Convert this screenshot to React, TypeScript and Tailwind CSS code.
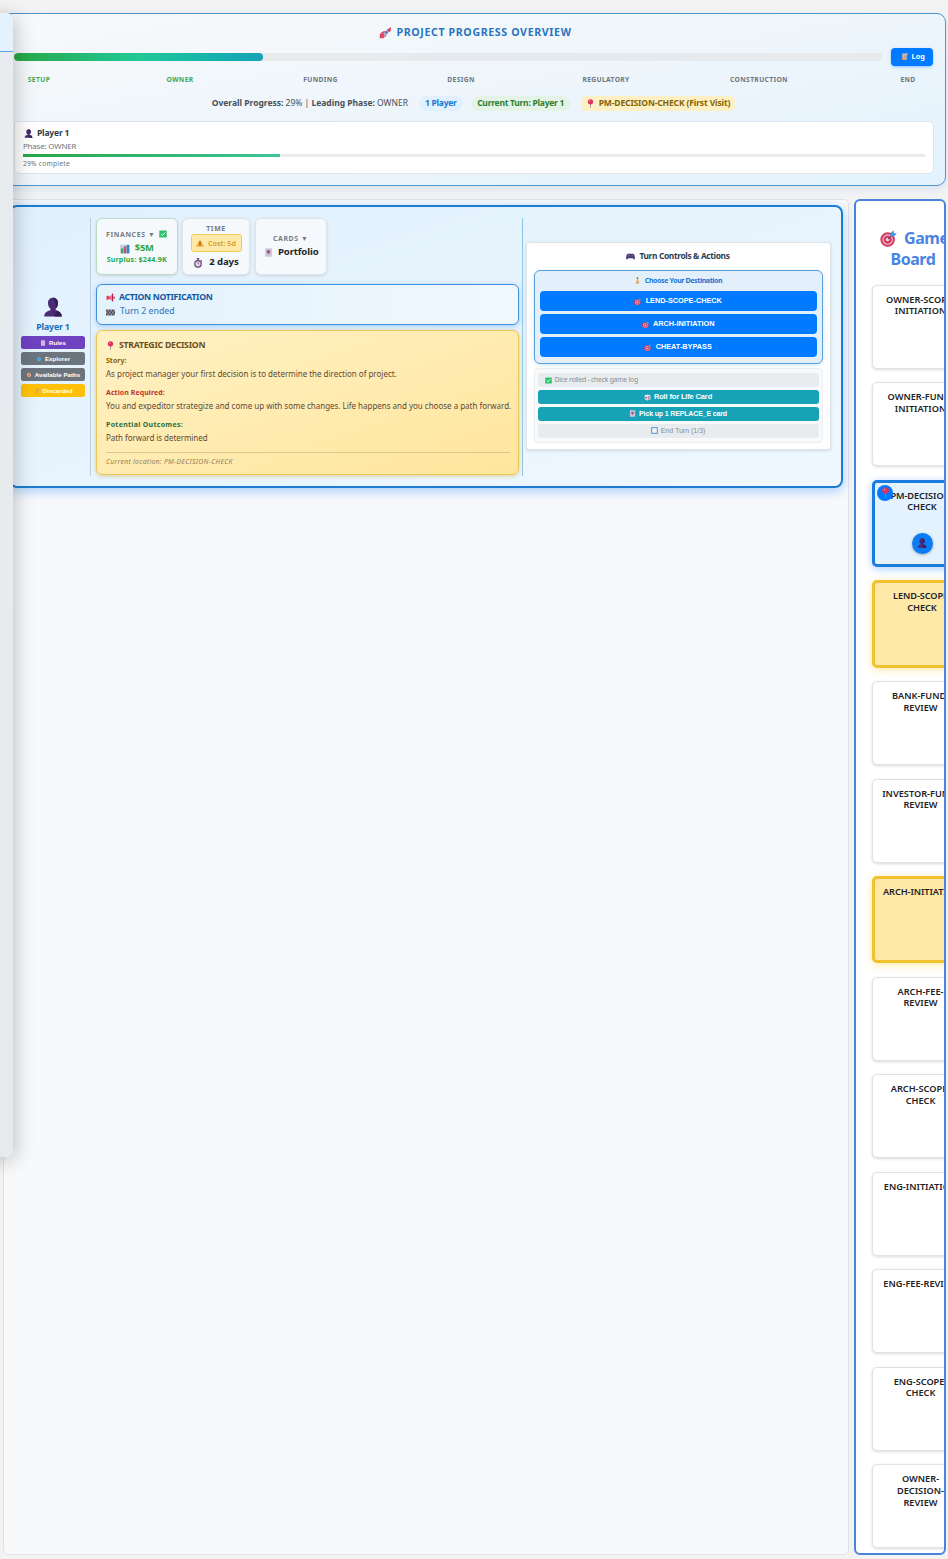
import React from "react";

type IconName =
  | "rocket" | "scroll" | "person" | "chart" | "check" | "warn" | "watch" | "card"
  | "mega" | "flag" | "pin" | "book" | "lens" | "compass" | "bin" | "target"
  | "pad" | "walker" | "die" | "square";

const shapes: Record<IconName, React.ReactNode> = {
  rocket: (
    <>
      <path d="M2 8l5-3 4 4-3 5z" fill="#e5476d" />
      <path d="M4.500 10 11 3l4-1-1 4-7 7z" fill="#aab5cc" />
      <path d="M11 3.500 16 0l-.5 5.500-2 1z" fill="#dd3d5c" />
      <circle cx="10" cy="7" r="1.700" fill="#4d74c9" />
      <path d="M1 9h5.500v6H1z" fill="#e04565" />
    </>
  ),
  scroll: (
    <>
      <path d="M3 1h11v3h-2v11H2v-3h1z" fill="#f2d0ae" />
      <path d="M5 4h6M5 7h6M5 10h6" stroke="#b0703f" strokeWidth="1.300" />
      <path d="M2 12h9v3H2z" fill="#e08a4f" />
    </>
  ),
  person: (
    <>
      <path d="M8 .5c2.800 0 4 2 4 4.300 0 2-.8 3.700-2 4.500v1.200c2.600.6 5 1.800 5 5H1c0-3.200 2.400-4.400 5-5V9.300c-1.200-.8-2-2.500-2-4.500C4 2.500 5.200.5 8 .5z" fill="#4b2c74" />
      <path d="M8 .5c2.800 0 4 2 4 4.300 0 2-.8 3.700-2 4.500v1.200c2.600.6 5 1.800 5 5H9c2-4 2-10-1-15z" fill="#351d57" />
    </>
  ),
  chart: (
    <>
      <path d="M0 1h16v14H0z" fill="#c5d1e0" />
      <path d="M1.500 7h3.800v8H1.500z" fill="#3fae6a" />
      <path d="M6 4h3.800v11H6z" fill="#d8476c" />
      <path d="M10.600 1.500h4V15h-4z" fill="#3181cf" />
    </>
  ),
  check: (
    <>
      <rect x="0.500" y="1" width="15" height="14" rx="1" fill="#2fc26b" />
      <path d="M4 8.200 7 11l5-6" stroke="#eafff2" strokeWidth="2" fill="none" />
    </>
  ),
  warn: (
    <>
      <path d="M8 1l7.500 14H.5z" fill="#f2a02c" />
      <path d="M8 5v5M8 11.500v2" stroke="#5b3a1c" strokeWidth="1.800" />
    </>
  ),
  watch: (
    <>
      <circle cx="8" cy="9.300" r="5.200" fill="#e7dcef" stroke="#5f4870" strokeWidth="2" />
      <path d="M6 1h4M8 1v3M12.500 3.500l1.500 1.500" stroke="#5f4870" strokeWidth="2" />
      <path d="M8 6v3.500h2" stroke="#c03a6c" strokeWidth="1.300" fill="none" />
    </>
  ),
  card: (
    <>
      <rect x="2" y="0.500" width="12" height="15" rx="1" fill="#cfc6db" />
      <path d="M5 4h6v3.500L8 12 5 7.500z" fill="#b0607f" />
      <path d="M6.500 5h3v2h-3z" fill="#6a5a95" />
    </>
  ),
  mega: (
    <>
      <path d="M1 5h4v7H1z" fill="#d8315c" />
      <path d="M5 7l5-4v10l-5-3z" fill="#ea5a7b" />
      <path d="M10.500 1h2.200v14h-2.200z" fill="#b42349" />
      <path d="M13 6h2.500v4H13z" fill="#d8315c" />
    </>
  ),
  flag: (
    <>
      <path d="M0 2.500h16v11H0z" fill="#9c9ca6" />
      <path d="M0 3h2.700v3.300H0zm5.300 0H8v3.300H5.300zm5.400 0h2.600v3.300h-2.600zM2.700 6.300h2.600v3.400H2.700zm5.300 0h2.700v3.400H8zm5.300 0H16v3.400h-2.700zM0 9.700h2.700V13H0zm5.300 0H8V13H5.300zm5.400 0h2.600V13h-2.600z" fill="#44444e" />
    </>
  ),
  pin: (
    <>
      <path d="M7.200 8h1.600L8.500 16h-1z" fill="#8b7d86" />
      <circle cx="8" cy="5" r="4.700" fill="#e0315c" />
      <circle cx="6.700" cy="3.800" r="1.200" fill="#f58da6" />
    </>
  ),
  book: (
    <>
      <path d="M3 1h10v14H3z" fill="#eadcf3" />
      <path d="M5 4h6M5 7h6M5 10h6M5 13h4" stroke="#8c6fb4" strokeWidth="1.200" />
    </>
  ),
  lens: (
    <>
      <circle cx="8" cy="8" r="5" fill="#4fbcf5" />
      <circle cx="8" cy="8" r="2.200" fill="#1c86d8" />
    </>
  ),
  compass: (
    <>
      <circle cx="8" cy="8" r="6.500" fill="#d9c3ad" stroke="#8c5f43" strokeWidth="2" />
      <path d="M11.500 4.500 9 9l-4.500 2.500L7 7z" fill="#c4502f" />
    </>
  ),
  bin: (
    <>
      <path d="M3 6h10l-1 9H4z" fill="#f3a53a" />
      <path d="M2 4l9-3 1 3-9 2z" fill="#d8a24a" />
      <path d="M10 1l4 1-2 4z" fill="#7fb56a" />
    </>
  ),
  target: (
    <>
      <circle cx="7.200" cy="9" r="6.900" fill="#cf3f63" />
      <circle cx="7.200" cy="9" r="4.900" fill="#f0c3d0" />
      <circle cx="7.200" cy="9" r="3.900" fill="#cf3f63" />
      <circle cx="7.200" cy="9" r="1.700" fill="#f3d9e2" />
      <path d="M7.500 8.700 12 4" stroke="#7b3450" strokeWidth="1" />
      <path d="M10 6V2.500L13 .2V3h2.800l-2.600 3z" fill="#3b9be8" />
    </>
  ),
  pad: (
    <>
      <path d="M3.500 3h9C15 3 16 9 15.700 12c-.3 2-2.300 1.500-3.700-1H4c-1.400 2.500-3.400 3-3.700 1C0 9 1 3 3.500 3z" fill="#4b3b78" />
      <circle cx="5" cy="6.500" r="1.200" fill="#8d7dbb" />
      <circle cx="11" cy="6.500" r="1.200" fill="#c06a92" />
    </>
  ),
  walker: (
    <>
      <circle cx="8" cy="2.500" r="2" fill="#7a5236" />
      <path d="M6 5h4l1 5H5.500z" fill="#f0b44c" />
      <path d="M6 10h4l2 5.500h-2L8 12l-2.500 3.500h-2z" fill="#c58a4a" />
    </>
  ),
  die: (
    <>
      <path d="M1.500 3 8 1l6.500 2v9L8 15l-6.500-3z" fill="#efe3ec" />
      <path d="M8 5l6.500-2v9L8 15z" fill="#d3c3d6" />
      <circle cx="5" cy="8.500" r="2" fill="#c7476f" />
      <circle cx="11" cy="7" r="1.200" fill="#60406e" />
      <circle cx="11" cy="11" r="1.200" fill="#60406e" />
    </>
  ),
  square: <rect x="1.500" y="1.500" width="13" height="13" fill="#eef5fb" stroke="#5a9bd8" strokeWidth="2.400" />,
};

function Icon({ name, className = "size-[9px]" }: { name: IconName; className?: string }) {
  return (
    <svg viewBox="0 0 16 16" className={`shrink-0 ${className}`} aria-hidden="true">
      {shapes[name]}
    </svg>
  );
}

const phases = [
  { label: "SETUP", reached: true },
  { label: "OWNER", reached: true },
  { label: "FUNDING", reached: false },
  { label: "DESIGN", reached: false },
  { label: "REGULATORY", reached: false },
  { label: "CONSTRUCTION", reached: false },
  { label: "END", reached: false },
];

function ProgressOverview() {
  return (
    <header className="ml-[3px] mt-[13px] h-[173px] w-[943px] rounded-[9px] border border-[#4d96cf] bg-linear-to-br from-[#f8f9fa] to-[#e3f2fd] pl-[10px] pr-[12px] shadow-[0_3px_10px_rgba(25,118,210,0.13)]">
      <h1 className="mt-[10px] flex h-[18px] items-center justify-center gap-[5px] pl-[4px] text-[10.600px] font-bold tracking-[0.640px] text-[#2874c0]">
        <Icon name="rocket" className="size-[12px]" />
        PROJECT PROGRESS OVERVIEW
      </h1>
      <div className="mt-[5.500px] flex h-[18px] items-center gap-[9px]">
        <div className="h-[8px] flex-1 overflow-hidden rounded-full bg-[#e7eaed]">
          <div className="h-full w-[248.500px] rounded-full bg-linear-to-r from-[#28a745] via-[#20c997] to-[#17a2b8]" />
        </div>
        <button className="flex h-[18px] w-[42px] items-center justify-center gap-[3px] rounded-[4px] bg-[#007bff] pl-[2px] text-[7.300px] font-bold text-white shadow-[0_1px_3px_rgba(0,123,255,0.4)]">
          <Icon name="scroll" className="size-[7.500px]" />
          Log
        </button>
      </div>
      <div className="mt-[8.500px] grid h-[13px] grid-cols-[50px_232px_49px_232px_58px_248px_50px] items-center text-center text-[6.700px] font-bold tracking-[0.370px]">
        {phases.map((p) => (
          <span key={p.label} className={`flex justify-center whitespace-nowrap ${p.reached ? "text-[#3fa653]" : "text-[#6c757d]"}`}>
            {p.label}
          </span>
        ))}
      </div>
      <div className="mt-[8px] flex h-[17px] items-center justify-center whitespace-nowrap text-[8.500px] text-[#495057]">
        <span className="tracking-[-0.010px]">
          <b>Overall Progress:</b> 29% | <b>Leading Phase:</b> OWNER
        </span>
        <span className="ml-[11px] flex h-[15px] items-center rounded-[8px] bg-[#e0f1fd] px-[6px] font-bold tracking-[-0.250px] text-[#1976d2]">1 Player</span>
        <span className="ml-[9px] flex h-[15px] items-center rounded-[8px] bg-[#e3f3e5] px-[5.500px] font-bold tracking-[-0.250px] text-[#2e7d32]">Current Turn: Player 1</span>
        <span className="ml-[11px] flex h-[15px] items-center gap-[4px] rounded-[5px] bg-[#fdf0c4] px-[5px] font-bold tracking-[-0.130px] text-[#856404]">
          <Icon name="pin" className="size-[9px]" />
          PM-DECISION-CHECK (First Visit)
        </span>
      </div>
      <div className="mr-[-1px] mt-[9px] h-[53px] rounded-[5px] border border-[#dee4ea] bg-white px-[8px] pt-[5px]">
        <div className="flex h-[13px] items-center gap-[4px] text-[8.500px] font-bold tracking-[-0.180px] text-[#333d47]">
          <Icon name="person" className="ml-[1px] size-[9px]" />
          Player 1
        </div>
        <div className="flex h-[14px] items-center text-[7.900px] tracking-[-0.160px] text-[#6c757d]">Phase: OWNER</div>
        <div className="h-[3px] bg-[#e9ecef]">
          <div className="h-full w-[257px] bg-linear-to-r from-[#28a745] to-[#3cc598]" />
        </div>
        <div className="mt-[2px] flex h-[11px] items-center text-[6.700px] tracking-[0.220px] text-[#6c757d]">29% complete</div>
      </div>
    </header>
  );
}

function PlayerColumn() {
  const button = "flex h-[13px] items-center justify-center gap-[3px] whitespace-nowrap rounded-[2.500px] font-['Liberation_Sans',sans-serif] text-[6.200px] font-bold text-white";
  return (
    <div className="flex w-[80px] flex-col justify-center border-r border-[#b9cfdf] pl-[10px] pr-[5px] pt-[1px]">
      <Icon name="person" className="size-[20px] self-center" />
      <div className="mt-[2px] flex h-[16px] items-center justify-center text-[8.800px] font-bold tracking-[-0.200px] text-[#1c6db8]">Player 1</div>
      <div className="mt-px flex flex-col gap-[3px]">
        <button className={`${button} bg-[#6f42c1]`}><Icon name="book" className="size-[6px]" />Rules</button>
        <button className={`${button} bg-[#6c757d]`}><Icon name="lens" className="size-[6px]" />Explorer</button>
        <button className={`${button} bg-[#6c757d]`}><Icon name="compass" className="size-[6px]" />Available Paths</button>
        <button className={`${button} bg-[#ffc107]`}><Icon name="bin" className="size-[6px]" />Discarded</button>
      </div>
    </div>
  );
}

function StatCards() {
  const card = "flex h-[57px] flex-col items-center justify-center rounded-[6px] border bg-[#f6f9fc] shadow-[0_1px_3px_rgba(0,0,0,0.12)] whitespace-nowrap";
  const label = "flex items-center text-[6.900px] font-bold tracking-[0.620px] text-[#737c84]";
  return (
    <div className="flex gap-[4.500px]">
      <div className={`${card} w-[81.500px] border-[#b8dfc6]`}>
        <div className={`${label} h-[12px] gap-[4px]`}>
          FINANCES ▼ <Icon name="check" className="mb-[2px] size-[8px]" />
        </div>
        <div className="flex h-[15px] items-center gap-[5px] text-[9.400px] font-bold tracking-[-0.200px] text-[#28a745]">
          <Icon name="chart" className="size-[10px]" />
          $5M
        </div>
        <div className="flex h-[8px] items-center text-[7px] font-bold tracking-[0.230px] text-[#28a745]">Surplus: $244.9K</div>
      </div>
      <div className={`${card} w-[68px] border-[#dde6ee] pt-[2px]`}>
        <div className={`${label} h-[10px]`}>TIME</div>
        <div className="flex h-[18px] w-[51px] items-center justify-center gap-[4px] rounded-[3px] border border-[#f0cb5a] bg-[#ffe9a8] text-[7.200px] font-semibold text-[#d29b1e]">
          <Icon name="warn" className="size-[8px]" />
          Cost: 5d
        </div>
        <div className="mt-[2px] flex h-[17px] items-center gap-[6px] text-[9.600px] font-bold tracking-[-0.130px] text-[#212529]">
          <Icon name="watch" className="size-[10px]" />
          2 days
        </div>
      </div>
      <div className={`${card} w-[72.500px] border-[#dde6ee]`}>
        <div className={`${label} h-[12px]`}>CARDS ▼</div>
        <div className="flex h-[14px] items-center gap-[5px] pl-[1px] text-[9.600px] font-bold tracking-[-0.150px] text-[#212529]">
          <Icon name="card" className="size-[9px]" />
          Portfolio
        </div>
      </div>
    </div>
  );
}

function StrategicDecision() {
  return (
    <section className="mt-[5px] h-[145px] whitespace-nowrap rounded-[6px] border border-[#edc65a] bg-linear-to-br from-[#fff1c4] to-[#ffe69c] pl-[9px] pr-[8px] pt-[7px] text-[8px] text-[#5f4a37] shadow-[0_1px_4px_rgba(200,150,0,0.4)]">
      <h2 className="flex h-[15px] items-center gap-[4px] text-[8.700px] font-bold tracking-[-0.240px] text-[#6b4f23]">
        <Icon name="pin" className="size-[9px]" />
        STRATEGIC DECISION
      </h2>
      <h3 className="mt-[2px] flex h-[13px] items-center text-[7px] font-bold text-[#856404]">Story:</h3>
      <p className="flex h-[11px] items-center tracking-[-0.010px]">As project manager your first decision is to determine the direction of project.</p>
      <h3 className="mt-[8px] flex h-[13px] items-center text-[7px] font-bold tracking-[0.060px] text-[#c1352f]">Action Required:</h3>
      <p className="flex h-[11px] items-center tracking-[-0.015px]">You and expeditor strategize and come up with some changes. Life happens and you choose a path forward.</p>
      <h3 className="mt-[8px] flex h-[13px] items-center text-[7px] font-bold tracking-[0.300px] text-[#2c6e3c]">Potential Outcomes:</h3>
      <p className="flex h-[12px] items-center tracking-[-0.060px]">Path forward is determined</p>
      <div className="mt-[8px] flex h-[20px] items-center border-t border-[#dcc78b] text-[6.900px] italic tracking-[0.270px] text-[#93825c]">Current location: PM-DECISION-CHECK</div>
    </section>
  );
}

function TurnControls() {
  const destinations = ["LEND-SCOPE-CHECK", "ARCH-INITIATION", "CHEAT-BYPASS"];
  const action = "flex h-[14.300px] items-center justify-center gap-[3px] rounded-[3px]";
  return (
    <section className="mt-[24px] h-[208px] w-[305px] rounded-[3px] border border-[#dde5ec] bg-white px-[7px] shadow-[0_1px_3px_rgba(0,0,0,0.12)]">
      <h2 className="mt-[4px] flex h-[18px] items-center justify-center gap-[4px] text-[8.400px] font-bold tracking-[-0.350px] text-[#2c3e50]">
        <Icon name="pad" className="size-[9px]" />
        Turn Controls &amp; Actions
      </h2>
      <div className="mt-[5px] h-[94px] rounded-[6px] border border-[#5a9fd9] bg-[#e3f0fc] px-[5px] shadow-[0_1px_4px_rgba(0,123,255,0.2)]">
        <h3 className="flex h-[19.500px] items-center justify-center gap-[4px] text-[7px] font-bold tracking-[-0.370px] text-[#1674d6]">
          <Icon name="walker" className="size-[7px]" />
          Choose Your Destination
        </h3>
        <div className="flex flex-col gap-[2.500px]">
          {destinations.map((d) => (
            <button key={d} className="flex h-[20.500px] items-center justify-center gap-[4px] rounded-[4px] bg-[#007bff] pt-[1px] font-['Liberation_Sans',sans-serif] text-[7.300px] font-bold text-white">
              <Icon name="target" className="size-[7.500px]" />
              {d}
            </button>
          ))}
        </div>
      </div>
      <div className="mt-[4px] flex h-[75px] flex-col gap-[2.600px] rounded-[4px] border-[1.500px] border-[#eceff2] bg-[#f8f9fa] px-[3px] pt-[4px] font-['Liberation_Sans',sans-serif] text-[7px] font-bold tracking-[-0.150px] text-white">
        <div className="flex h-[14.300px] items-center gap-[3px] rounded-[3px] bg-[#e9ecef] px-[7px] font-['Noto_Sans',sans-serif] text-[6.800px] font-normal tracking-[-0.220px] text-[#858d94]">
          <Icon name="check" className="size-[7px]" />
          Dice rolled - check game log
        </div>
        <button className={`${action} bg-[#17a2b8] text-[7.500px]`}><Icon name="die" className="size-[7px]" />Roll for Life Card</button>
        <button className={`${action} bg-[#17a2b8]`}><Icon name="card" className="size-[7px]" />Pick up 1 REPLACE_E card</button>
        <button className={`${action} bg-[#e9ecef] font-normal tracking-normal text-[#858d94]`}><Icon name="square" className="size-[7px]" />End Turn (1/3)</button>
      </div>
    </section>
  );
}

function PlayerPanel() {
  return (
    <main className="h-[1356px] w-[846px] rounded-[5px] border border-[#dfe3e8] bg-[#f8f9fb] pl-[5px] pt-[5px]">
      <div className="flex h-[282.500px] w-[834px] rounded-[8px] border-2 border-[#1b7cd0] bg-linear-to-br from-[#e1f0fd] via-[#e7f4fd] to-[#eff8ff] pb-[10px] pt-[11px] shadow-[0_3px_12px_rgba(0,123,255,0.35)]">
        <PlayerColumn />
        <div className="w-[432px] border-r border-[#8fc5e4] pl-[5px] pr-[3px]">
          <StatCards />
          <section className="mt-[9px] h-[41px] rounded-[6px] border border-[#3f8fd9] bg-linear-to-r from-[#e3f2fd] to-[#f0f8ff] px-[9px] pt-[5.500px] shadow-[0_1px_5px_rgba(0,123,255,0.35)]">
            <h2 className="flex h-[14px] items-center gap-[4px] text-[8.700px] font-bold tracking-[-0.320px] text-[#14599f]">
              <Icon name="mega" className="size-[9px]" />
              ACTION NOTIFICATION
            </h2>
            <p className="flex h-[15px] items-center gap-[5px] text-[8.700px] font-medium text-[#3b82bd]">
              <Icon name="flag" className="size-[9px]" />
              Turn 2 ended
            </p>
          </section>
          <StrategicDecision />
        </div>
        <div className="flex pl-[2.500px]">
          <TurnControls />
        </div>
      </div>
    </main>
  );
}

type Space = { lines: string[]; kind?: "current" | "next" };

const spaces: Space[] = [
  { lines: ["OWNER-SCOPE-", "INITIATION"] },
  { lines: ["OWNER-FUND-", "INITIATION"] },
  { lines: ["PM-DECISION-", "CHECK"], kind: "current" },
  { lines: ["LEND-SCOPE-", "CHECK"], kind: "next" },
  { lines: ["BANK-FUND-", "REVIEW"] },
  { lines: ["INVESTOR-FUND-", "REVIEW"] },
  { lines: ["ARCH-INITIATION"], kind: "next" },
  { lines: ["ARCH-FEE-", "REVIEW"] },
  { lines: ["ARCH-SCOPE-", "CHECK"] },
  { lines: ["ENG-INITIATION"] },
  { lines: ["ENG-FEE-REVIEW"] },
  { lines: ["ENG-SCOPE-", "CHECK"] },
  { lines: ["OWNER-", "DECISION-", "REVIEW"] },
];

function SpaceTile({ lines, kind }: Space) {
  const look =
    kind === "current"
      ? "h-[87.300px] w-[100px] tracking-[-0.080px] border-[3px] border-[#1b7cdc] bg-[#e3f2fd] pt-[7px] shadow-[0_2px_8px_rgba(0,123,255,0.35)]"
      : kind === "next"
        ? "h-[87.300px] w-[100px] tracking-[-0.080px] border-[3px] border-[#f2c12e] bg-[#ffe9a8] pt-[7px] shadow-[0_2px_8px_rgba(255,193,7,0.35)]"
        : "h-[84px] w-[97px] border border-[#e0e2e5] bg-white pt-[8px] shadow-[0_1px_3px_rgba(0,0,0,0.15)]";
  return (
    <div className={`relative flex shrink-0 flex-col items-center rounded-[5px] text-[9.200px] font-semibold leading-[11.600px] text-[#1d2226] ${look}`}>
      {lines.map((l) => (
        <span key={l} className="whitespace-nowrap">{l}</span>
      ))}
      {kind === "current" && (
        <>
          <span className="absolute left-[2px] top-[2px] flex size-[16px] items-center justify-center rounded-full bg-[#007bff]">
            <Icon name="pin" className="size-[11px]" />
          </span>
          <span className="mt-[20px] flex size-[21px] items-center justify-center rounded-full bg-[#0a7cf5] shadow-[0_1px_3px_rgba(0,0,0,0.3)]">
            <Icon name="person" className="size-[10px]" />
          </span>
        </>
      )}
    </div>
  );
}

function GameBoard() {
  return (
    <aside className="ml-[5px] h-[1356px] w-[91.500px] overflow-hidden rounded-[6px] border-2 border-[#4a84da] bg-white pl-[16px]">
      <h2 className="mt-[26.500px] w-[84px] text-[16px] font-bold leading-[21px] tracking-[-0.450px] text-[#4a83e4]">
        <span className="flex items-center gap-[7px] whitespace-nowrap pl-[8px]">
          <Icon name="target" className="size-[17px]" />
          Game
        </span>
        <span className="block pl-[18.500px]">Board</span>
      </h2>
      <div className="mt-[15px] flex flex-col gap-[13.500px]">
        {spaces.map((s) => (
          <SpaceTile key={s.lines.join("")} {...s} />
        ))}
      </div>
    </aside>
  );
}

export default function App() {
  return (
    <div className="relative flex h-[1559px] w-[948px] flex-col overflow-hidden bg-[#f3f3f4] font-['Noto_Sans',sans-serif]">
      <ProgressOverview />
      <div className="ml-[3px] mt-[13px] flex">
        <PlayerPanel />
        <GameBoard />
      </div>
      <div className="absolute left-[-40px] top-[13px] h-[1144px] w-[53px] rounded-r-[8px] bg-linear-to-b from-[#e9ecef] to-[#e6eaed] shadow-[3px_3px_20px_rgba(0,0,0,0.22)]">
        <div className="h-[38.500px] rounded-tr-[8px] border-b-[1.500px] border-[#5aa0dc] bg-[#e3f2fd]" />
      </div>
    </div>
  );
}
